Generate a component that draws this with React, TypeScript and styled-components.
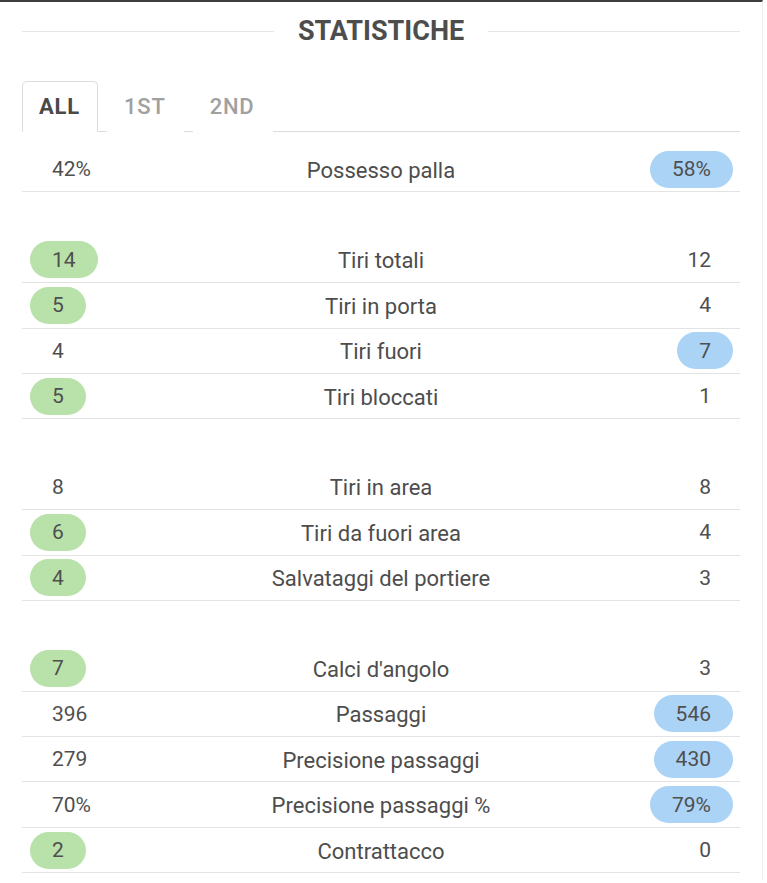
import React, { useState } from 'react';
import styled, { createGlobalStyle } from 'styled-components';

const GlobalStyle = createGlobalStyle`
  html, body {
    margin: 0;
    padding: 0;
    background: #ffffff;
  }
  body {
    font-family: Roboto, "Liberation Sans", Arial, sans-serif;
    color: #4a4a4a;
  }
`;

type Side = 'home' | 'away' | null;

interface Stat {
  label: string;
  home: string;
  away: string;
  lead: Side;
}

const groups: Stat[][] = [
  [{ label: 'Possesso palla', home: '42%', away: '58%', lead: 'away' }],
  [
    { label: 'Tiri totali', home: '14', away: '12', lead: 'home' },
    { label: 'Tiri in porta', home: '5', away: '4', lead: 'home' },
    { label: 'Tiri fuori', home: '4', away: '7', lead: 'away' },
    { label: 'Tiri bloccati', home: '5', away: '1', lead: 'home' },
  ],
  [
    { label: 'Tiri in area', home: '8', away: '8', lead: null },
    { label: 'Tiri da fuori area', home: '6', away: '4', lead: 'home' },
    { label: 'Salvataggi del portiere', home: '4', away: '3', lead: 'home' },
  ],
  [
    { label: "Calci d'angolo", home: '7', away: '3', lead: 'home' },
    { label: 'Passaggi', home: '396', away: '546', lead: 'away' },
    { label: 'Precisione passaggi', home: '279', away: '430', lead: 'away' },
    { label: 'Precisione passaggi %', home: '70%', away: '79%', lead: 'away' },
    { label: 'Contrattacco', home: '2', away: '0', lead: 'home' },
  ],
];

const Page = styled.div`
  border-top: 2px solid #3d3d3d;
  border-right: 1px solid #eeeeee;
  width: 763px;
  min-height: 881px;
  box-sizing: border-box;
`;

const Content = styled.div`
  margin-left: 22px;
  width: 718px;
`;

const TitleRow = styled.div`
  display: flex;
  align-items: center;
  gap: 24px;
  height: 58px;
`;

const TitleLine = styled.div`
  flex: 1;
  height: 1px;
  background: #e6e6e6;
`;

const Title = styled.h2`
  margin: 0;
  font-size: 27px;
  font-weight: 700;
  color: #4d4d4d;
`;

const Tabs = styled.div`
  display: flex;
  margin-top: 21px;
  border-bottom: 1px solid #dcdcdc;
  height: 51px;
  box-sizing: border-box;
`;

const Tab = styled.button<{ $active?: boolean }>`
  font-family: Roboto, "Liberation Sans", Arial, sans-serif;
  font-size: 22px;
  font-weight: ${p => (p.$active ? 700 : 500)};
  letter-spacing: 0.8px;
  color: ${p => (p.$active ? '#4a4a4a' : '#a0a0a0')};
  background: #ffffff;
  padding: 0 17px 0 16px;
  margin: 0 9px -1px 0;
  border: 1px solid ${p => (p.$active ? '#dcdcdc' : 'transparent')};
  border-bottom-color: ${p => (p.$active ? '#ffffff' : 'transparent')};
  border-radius: 5px 5px 0 0;
  cursor: pointer;
`;

const Table = styled.div`
  margin-top: 15px;
`;

const Row = styled.div`
  display: grid;
  grid-template-columns: 1fr auto 1fr;
  align-items: center;
  height: 45.4px;
  box-sizing: border-box;
  border-bottom: 1px solid #e3e3e3;
`;

const Spacer = styled.div`
  height: 45.4px;
`;

const Label = styled.div`
  font-size: 22px;
  color: #4d4d4d;
  text-align: center;
  white-space: nowrap;
  padding-top: 2px;
`;

const Value = styled.span<{ $lead: Side; $side: 'home' | 'away' }>`
  justify-self: ${p => (p.$side === 'home' ? 'start' : 'end')};
  margin: ${p => (p.$side === 'home' ? '0 0 0 8px' : '0 7px 0 0')};
  display: inline-flex;
  align-items: center;
  height: 37px;
  padding: 0 22px;
  border-radius: 19px;
  font-size: 21px;
  color: #4f4f4f;
  background: ${p =>
    p.$lead === p.$side ? (p.$side === 'home' ? '#b8e2a9' : '#abd3f6') : 'transparent'};
`;

export default function App() {
  const [tab, setTab] = useState('ALL');
  return (
    <>
      <GlobalStyle />
      <Page>
        <Content>
          <TitleRow>
            <TitleLine />
            <Title>STATISTICHE</Title>
            <TitleLine />
          </TitleRow>
          <Tabs>
            {['ALL', '1ST', '2ND'].map(t => (
              <Tab key={t} $active={tab === t} onClick={() => setTab(t)}>
                {t}
              </Tab>
            ))}
          </Tabs>
          <Table>
            {groups.map((g, gi) => (
              <React.Fragment key={gi}>
                {gi > 0 && <Spacer />}
                {g.map(s => (
                  <Row key={s.label}>
                    <Value $side="home" $lead={s.lead}>{s.home}</Value>
                    <Label>{s.label}</Label>
                    <Value $side="away" $lead={s.lead}>{s.away}</Value>
                  </Row>
                ))}
              </React.Fragment>
            ))}
          </Table>
        </Content>
      </Page>
    </>
  );
}
